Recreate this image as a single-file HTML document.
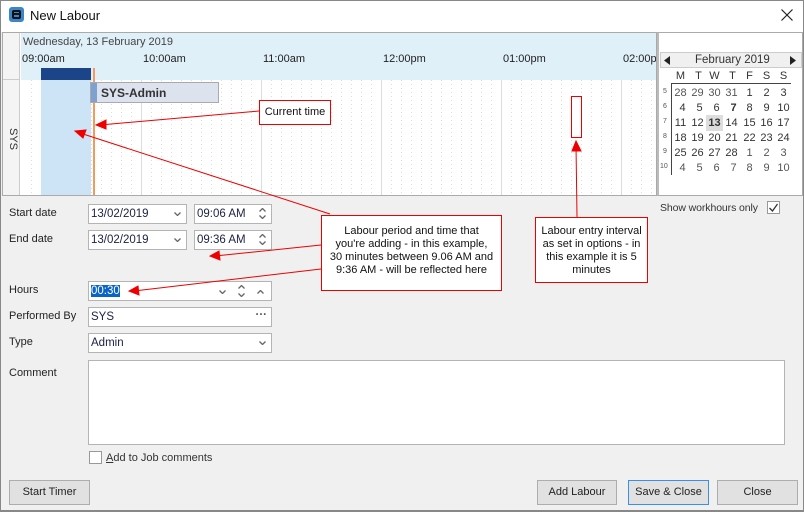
<!DOCTYPE html>
<html><head><meta charset="utf-8"><style>
*{box-sizing:border-box;margin:0;padding:0}
body{width:804px;height:512px;overflow:hidden;background:#f0f0f0;font-family:"Liberation Sans",sans-serif;font-size:11px;color:#222;position:relative}
.a{position:absolute}
.inp{position:absolute;background:#fff;border:1px solid #b4b4b4;height:20px;color:#1b2145;padding:3px 0 0 2px;font-size:11.5px}
.lbl{position:absolute;left:9px;font-size:11px;color:#222}
.btn{position:absolute;top:480px;height:25px;background:#e1e1e1;border:1px solid #adadad;text-align:center;line-height:23px;font-size:11px;color:#222}
.call{position:absolute;background:#fff;border:1px solid #e00;text-align:center;font-size:11px;line-height:13px;color:#111}
.cal span{position:absolute;width:17px;text-align:center;font-size:11px;color:#333}
.wk{position:absolute;left:663px;font-size:7px;color:#555}
.chev{position:absolute;color:#666}
</style></head><body>
<!-- title bar -->
<div class="a" style="left:0;top:0;width:804px;height:32px;background:#fff;border:1px solid #888;border-bottom:none"></div>
<div class="a" style="left:9px;top:7px;width:15px;height:15px;background:#3a86c8;border-radius:3px"></div>
<div class="a" style="left:12px;top:10px;width:9px;height:9px;border:2px solid #111;border-radius:2px"></div>
<div class="a" style="left:12px;top:13px;width:9px;height:2px;background:#111"></div>
<div class="a" style="left:30px;top:8px;font-size:13px;color:#111">New Labour</div>
<svg class="a" style="left:781px;top:9px" width="12" height="12"><path d="M0.5 0.5L11.5 11.5M11.5 0.5L0.5 11.5" stroke="#222" stroke-width="1.2"/></svg>
<div class="a" style="left:0;top:32px;width:1px;height:480px;background:#888"></div>
<div class="a" style="left:803px;top:32px;width:1px;height:480px;background:#888"></div>
<div class="a" style="left:0;top:510px;width:804px;height:2px;background:#888"></div>

<!-- scheduler -->
<div class="a" style="left:2px;top:32px;width:655px;height:164px;background:#fff;border:1px solid #aaa"></div>
<div class="a" style="left:3px;top:33px;width:17px;height:162px;background:#f4f4f4;border-right:1px solid #ccc"></div>
<div class="a" style="left:3px;top:79px;width:17px;height:1px;background:#ccc"></div>
<div class="a" style="top:128px;transform:rotate(90deg);transform-origin:left top;left:19px;font-size:11px;color:#333">SYS</div>
<div class="a" style="left:21px;top:33px;width:635px;height:47px;background:#dff0f8"></div>
<div class="a" style="left:23px;top:36px;color:#444;font-size:11px">Wednesday, 13 February 2019</div>
<div class="a" style="left:22px;top:53px;color:#222">09:00am</div>
<div class="a" style="left:143px;top:53px;color:#222">10:00am</div>
<div class="a" style="left:263px;top:53px;color:#222">11:00am</div>
<div class="a" style="left:383px;top:53px;color:#222">12:00pm</div>
<div class="a" style="left:503px;top:53px;color:#222">01:00pm</div>
<div class="a" style="left:623px;top:53px;color:#222;width:33px;overflow:hidden;white-space:nowrap">02:00pm</div>
<svg class="a" style="left:21px;top:80px" width="635" height="115">
<g stroke="#ddd" stroke-dasharray="1,3">
<line x1="10.5" y1="0" x2="10.5" y2="115"/><line x1="20.5" y1="0" x2="20.5" y2="115"/><line x1="30.5" y1="0" x2="30.5" y2="115"/><line x1="40.5" y1="0" x2="40.5" y2="115"/><line x1="50.5" y1="0" x2="50.5" y2="115"/><line x1="60.5" y1="0" x2="60.5" y2="115"/><line x1="70.5" y1="0" x2="70.5" y2="115"/><line x1="80.5" y1="0" x2="80.5" y2="115"/><line x1="90.5" y1="0" x2="90.5" y2="115"/><line x1="100.5" y1="0" x2="100.5" y2="115"/><line x1="110.5" y1="0" x2="110.5" y2="115"/>
<line x1="130.5" y1="0" x2="130.5" y2="115"/><line x1="140.5" y1="0" x2="140.5" y2="115"/><line x1="150.5" y1="0" x2="150.5" y2="115"/><line x1="160.5" y1="0" x2="160.5" y2="115"/><line x1="170.5" y1="0" x2="170.5" y2="115"/><line x1="180.5" y1="0" x2="180.5" y2="115"/><line x1="190.5" y1="0" x2="190.5" y2="115"/><line x1="200.5" y1="0" x2="200.5" y2="115"/><line x1="210.5" y1="0" x2="210.5" y2="115"/><line x1="220.5" y1="0" x2="220.5" y2="115"/><line x1="230.5" y1="0" x2="230.5" y2="115"/>
<line x1="250.5" y1="0" x2="250.5" y2="115"/><line x1="260.5" y1="0" x2="260.5" y2="115"/><line x1="270.5" y1="0" x2="270.5" y2="115"/><line x1="280.5" y1="0" x2="280.5" y2="115"/><line x1="290.5" y1="0" x2="290.5" y2="115"/><line x1="300.5" y1="0" x2="300.5" y2="115"/><line x1="310.5" y1="0" x2="310.5" y2="115"/><line x1="320.5" y1="0" x2="320.5" y2="115"/><line x1="330.5" y1="0" x2="330.5" y2="115"/><line x1="340.5" y1="0" x2="340.5" y2="115"/><line x1="350.5" y1="0" x2="350.5" y2="115"/>
<line x1="370.5" y1="0" x2="370.5" y2="115"/><line x1="380.5" y1="0" x2="380.5" y2="115"/><line x1="390.5" y1="0" x2="390.5" y2="115"/><line x1="400.5" y1="0" x2="400.5" y2="115"/><line x1="410.5" y1="0" x2="410.5" y2="115"/><line x1="420.5" y1="0" x2="420.5" y2="115"/><line x1="430.5" y1="0" x2="430.5" y2="115"/><line x1="440.5" y1="0" x2="440.5" y2="115"/><line x1="450.5" y1="0" x2="450.5" y2="115"/><line x1="460.5" y1="0" x2="460.5" y2="115"/><line x1="470.5" y1="0" x2="470.5" y2="115"/>
<line x1="490.5" y1="0" x2="490.5" y2="115"/><line x1="500.5" y1="0" x2="500.5" y2="115"/><line x1="510.5" y1="0" x2="510.5" y2="115"/><line x1="520.5" y1="0" x2="520.5" y2="115"/><line x1="530.5" y1="0" x2="530.5" y2="115"/><line x1="540.5" y1="0" x2="540.5" y2="115"/><line x1="550.5" y1="0" x2="550.5" y2="115"/><line x1="560.5" y1="0" x2="560.5" y2="115"/><line x1="570.5" y1="0" x2="570.5" y2="115"/><line x1="580.5" y1="0" x2="580.5" y2="115"/><line x1="590.5" y1="0" x2="590.5" y2="115"/>
<line x1="610.5" y1="0" x2="610.5" y2="115"/><line x1="620.5" y1="0" x2="620.5" y2="115"/><line x1="630.5" y1="0" x2="630.5" y2="115"/>
</g>
<g stroke="#ddd"><line x1="120.5" y1="0" x2="120.5" y2="115"/><line x1="240.5" y1="0" x2="240.5" y2="115"/><line x1="360.5" y1="0" x2="360.5" y2="115"/><line x1="480.5" y1="0" x2="480.5" y2="115"/><line x1="600.5" y1="0" x2="600.5" y2="115"/></g>
</svg>
<div class="a" style="left:41px;top:68px;width:50px;height:12px;background:#1b4588"></div>
<div class="a" style="left:41px;top:80px;width:50px;height:115px;background:#cde4f6"></div>
<div class="a" style="left:93px;top:68px;width:2px;height:127px;background:#f59a5a"></div>
<div class="a" style="left:90px;top:82px;width:129px;height:21px;background:#dce2ee;border:1px solid #aaa"></div>
<div class="a" style="left:91px;top:83px;width:6px;height:19px;background:#7ea1cf"></div>
<div class="a" style="left:101px;top:86px;font-weight:bold;font-size:12px;color:#333">SYS-Admin</div>

<!-- calendar -->
<div class="a" style="left:657px;top:32px;width:146px;height:164px;background:#fff;border:1px solid #aaa;border-left:2px solid #bbb"></div>
<div class="a" style="left:660px;top:52px;width:142px;height:16px;background:#f0f0f0;border:1px solid #ccc"></div>
<svg class="a" style="left:664px;top:56px" width="6" height="9"><path d="M6 0L0 4.5L6 9Z" fill="#222"/></svg>
<svg class="a" style="left:790px;top:56px" width="6" height="9"><path d="M0 0L6 4.5L0 9Z" fill="#222"/></svg>
<div class="a" style="left:695px;top:54px;font-size:11.5px;color:#333">February 2019</div>
<div class="a" style="left:671px;top:83px;width:120px;height:1px;background:#444"></div>
<div class="a" style="left:671px;top:83px;width:1px;height:92px;background:#444"></div>
<div class="cal">
<span style="left:672px;top:70px">M</span><span style="left:690px;top:70px">T</span><span style="left:706px;top:70px">W</span><span style="left:724px;top:70px">T</span><span style="left:741px;top:70px">F</span><span style="left:758px;top:70px">S</span><span style="left:775px;top:70px">S</span>
<div class="wk" style="top:88px">5</div><div class="wk" style="top:103px">6</div><div class="wk" style="top:118px">7</div><div class="wk" style="top:133px">8</div><div class="wk" style="top:148px">9</div><div class="wk" style="top:163px;left:660px">10</div>
<span style="left:672px;top:87px;color:#555">28</span><span style="left:689px;top:87px;color:#555">29</span><span style="left:706px;top:87px;color:#555">30</span><span style="left:723px;top:87px;color:#555">31</span><span style="left:741px;top:87px">1</span><span style="left:758px;top:87px">2</span><span style="left:775px;top:87px">3</span>
<span style="left:674px;top:102px">4</span><span style="left:691px;top:102px">5</span><span style="left:708px;top:102px">6</span><span style="left:725px;top:102px;font-weight:bold">7</span><span style="left:741px;top:102px">8</span><span style="left:758px;top:102px">9</span><span style="left:775px;top:102px">10</span>
<span style="left:672px;top:117px">11</span><span style="left:689px;top:117px">12</span><span style="left:706px;top:115px;font-weight:bold;background:#ddd;height:16px;padding-top:2px">13</span><span style="left:723px;top:117px">14</span><span style="left:741px;top:117px">15</span><span style="left:758px;top:117px">16</span><span style="left:775px;top:117px">17</span>
<span style="left:672px;top:132px">18</span><span style="left:689px;top:132px">19</span><span style="left:706px;top:132px">20</span><span style="left:723px;top:132px">21</span><span style="left:741px;top:132px">22</span><span style="left:758px;top:132px">23</span><span style="left:775px;top:132px">24</span>
<span style="left:672px;top:147px">25</span><span style="left:689px;top:147px">26</span><span style="left:706px;top:147px">27</span><span style="left:723px;top:147px">28</span><span style="left:741px;top:147px;color:#555">1</span><span style="left:758px;top:147px;color:#555">2</span><span style="left:775px;top:147px;color:#555">3</span>
<span style="left:674px;top:162px;color:#555">4</span><span style="left:691px;top:162px;color:#555">5</span><span style="left:708px;top:162px;color:#555">6</span><span style="left:725px;top:162px;color:#555">7</span><span style="left:741px;top:162px;color:#555">8</span><span style="left:758px;top:162px;color:#555">9</span><span style="left:775px;top:162px;color:#555">10</span>
</div>

<!-- show workhours -->
<div class="a" style="left:660px;top:202px;color:#333;font-size:10.5px;letter-spacing:-0.1px">Show workhours only</div>
<div class="a" style="left:767px;top:201px;width:13px;height:13px;background:#fff;border:1px solid #999"></div>
<svg class="a" style="left:769px;top:203px" width="9" height="9"><path d="M0.5 5L3.5 8L8.5 1" stroke="#333" stroke-width="1.3" fill="none"/></svg>

<!-- form -->
<div class="lbl" style="top:207px">Start date</div>
<div class="lbl" style="top:233px">End date</div>
<div class="lbl" style="top:284px">Hours</div>
<div class="lbl" style="top:310px">Performed By</div>
<div class="lbl" style="top:336px">Type</div>
<div class="lbl" style="top:367px">Comment</div>
<svg width="0" height="0" style="position:absolute"><defs>
<path id="dn" d="M0.5 0.5L3.5 3.5L6.5 0.5" stroke="#666" stroke-width="1.3" fill="none"/>
<path id="up" d="M0.5 3.5L3.5 0.5L6.5 3.5" stroke="#666" stroke-width="1.3" fill="none"/>
</defs></svg>
<div class="inp" style="left:88px;top:204px;width:99px">13/02/2019<svg class="chev" style="right:5px;top:7px" width="7" height="4"><use href="#dn"/></svg></div>
<div class="inp" style="left:194px;top:204px;width:78px">09:06 AM<svg class="chev" style="right:5px;top:3px" width="7" height="4"><use href="#up"/></svg><svg class="chev" style="right:5px;top:10px" width="7" height="4"><use href="#dn"/></svg></div>
<div class="inp" style="left:88px;top:230px;width:99px">13/02/2019<svg class="chev" style="right:5px;top:7px" width="7" height="4"><use href="#dn"/></svg></div>
<div class="inp" style="left:194px;top:230px;width:78px">09:36 AM<svg class="chev" style="right:5px;top:3px" width="7" height="4"><use href="#up"/></svg><svg class="chev" style="right:5px;top:10px" width="7" height="4"><use href="#dn"/></svg></div>
<div class="inp" style="left:88px;top:281px;width:184px"><span style="background:#0a64c8;color:#fff">00:30</span><svg class="chev" style="left:130px;top:8px" width="7" height="4"><use href="#dn"/></svg><svg class="chev" style="left:149px;top:3px" width="7" height="4"><use href="#up"/></svg><svg class="chev" style="left:149px;top:11px" width="7" height="4"><use href="#dn"/></svg><svg class="chev" style="left:168px;top:8px" width="7" height="4"><use href="#up"/></svg></div>
<div class="inp" style="left:88px;top:307px;width:184px">SYS<span class="a" style="right:4px;top:1px;color:#555;font-weight:bold">···</span></div>
<div class="inp" style="left:88px;top:333px;width:184px">Admin<svg class="chev" style="right:5px;top:7px" width="7" height="4"><use href="#dn"/></svg></div>
<div class="inp" style="left:88px;top:360px;width:697px;height:85px"></div>
<div class="a" style="left:89px;top:451px;width:13px;height:13px;background:#fff;border:1px solid #999"></div>
<div class="a" style="left:106px;top:452px;color:#333"><u>A</u>dd to Job comments</div>

<div class="btn" style="left:9px;width:81px">Start Timer</div>
<div class="btn" style="left:537px;width:80px">Add Labour</div>
<div class="btn" style="left:628px;width:81px;border-color:#3c8ee8">Save &amp; Close</div>
<div class="btn" style="left:717px;width:81px">Close</div>

<!-- callouts -->
<div class="a" style="left:571px;top:96px;width:11px;height:42px;border:1px solid #e00"></div>
<svg class="a" style="left:0;top:0" width="804" height="512">
<g stroke="#e00" stroke-width="1" fill="#e00">
<line x1="259" y1="111" x2="100" y2="125"/><polygon points="96,125 106,120 106,129"/>
<line x1="330" y1="214" x2="80" y2="133"/><polygon points="75,131 86,130 83,138"/>
<line x1="321" y1="245" x2="215" y2="256"/><polygon points="210,256 219,251 220,260"/>
<line x1="321" y1="269" x2="134" y2="291"/><polygon points="129,291 138,286 139,295"/>
<line x1="577" y1="217" x2="576" y2="145"/><polygon points="576,141 572,151 581,151"/>
</g></svg>
<div class="call" style="left:259px;top:100px;width:72px;height:25px;line-height:23px">Current time</div>
<div class="call" style="left:321px;top:215px;width:181px;height:76px;padding-top:9px">Labour period and time that<br>you're adding - in this example,<br>30 minutes between 9.06 AM and<br>9:36 AM - will be reflected here</div>
<div class="call" style="left:535px;top:217px;width:113px;height:66px;padding-top:7px">Labour entry interval<br>as set in options - in<br>this example it is 5<br>minutes</div>
</body></html>
